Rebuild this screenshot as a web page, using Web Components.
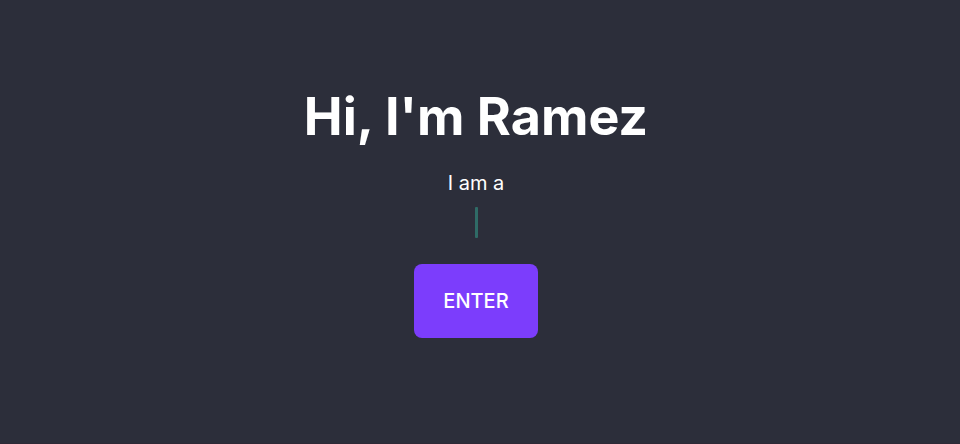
<!DOCTYPE html>
<html lang="en">
<head>
<meta charset="utf-8">
<title>Ramez</title>
<style>
body { margin: 0; background: #2c2e3a; }
</style>
</head>
<body>
<intro-page>
  <span slot="title">Hi, I'm Ramez</span>
  <span slot="lead">I am a</span>
  <type-cursor slot="typed"></type-cursor>
  <enter-button slot="action">ENTER</enter-button>
</intro-page>
<script>
class IntroPage extends HTMLElement {
  constructor() {
    super();
    this.attachShadow({ mode: 'open' }).innerHTML = `
      <style>
        :host { display: block; color: #fff; font-family: Inter, "Liberation Sans", sans-serif; }
        main { box-sizing: border-box; min-height: 100vh; padding: 0 8px 21px 0; display: flex; flex-direction: column; align-items: center; justify-content: center; border-bottom: 1px solid #2e2936; }
        h1 { margin: 0 0 20px; font-size: 52px; line-height: 64px; font-weight: 700; }
        p { margin: 0 0 10px; font-size: 20px; line-height: 28px; }
        .typed { margin-bottom: 26px; }
      </style>
      <main>
        <h1><slot name="title"></slot></h1>
        <p><slot name="lead"></slot></p>
        <div class="typed"><slot name="typed"></slot></div>
        <slot name="action"></slot>
      </main>`;
  }
}
class TypeCursor extends HTMLElement {
  constructor() {
    super();
    this.attachShadow({ mode: 'open' }).innerHTML = `
      <style>:host { display: block; width: 3px; height: 31px; border-radius: 1px; background: #2f6b66; }</style>`;
  }
}
class EnterButton extends HTMLElement {
  constructor() {
    super();
    this.attachShadow({ mode: 'open' }).innerHTML = `
      <style>
        :host { display: block; }
        button { display: block; border: 0; border-radius: 8px; padding: 24px 29px; background: #7c3dfc; color: #fff; font: 500 20px/26px Inter, "Liberation Sans", sans-serif; cursor: pointer; }
      </style>
      <button type="button"><slot></slot></button>`;
  }
}
customElements.define('intro-page', IntroPage);
customElements.define('type-cursor', TypeCursor);
customElements.define('enter-button', EnterButton);
</script>
</body>
</html>
